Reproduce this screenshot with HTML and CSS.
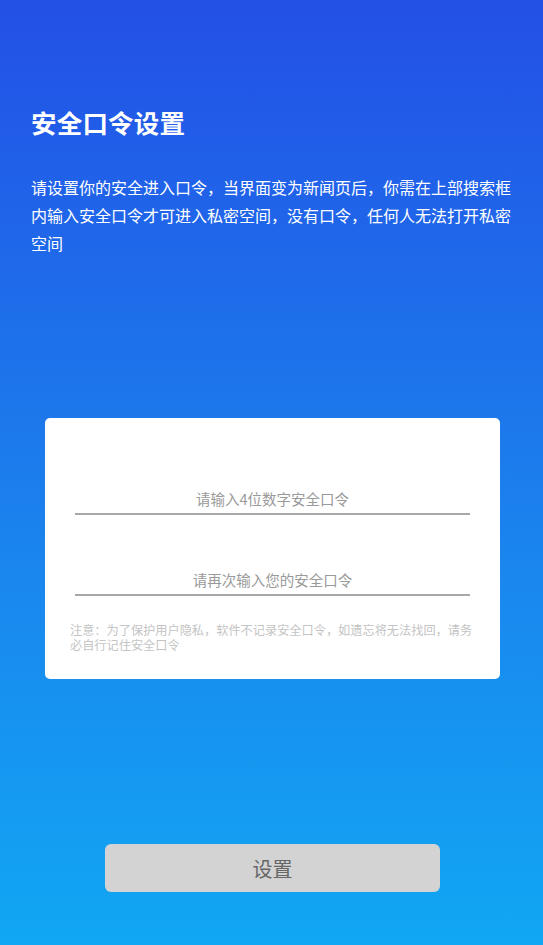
FILE: index.html
```html
<!DOCTYPE html>
<html lang="zh-CN">
<head>
<meta charset="utf-8">
<title>安全口令设置</title>
<link rel="stylesheet" href="styles.css">
</head>
<body>
<div class="page">
  <header class="intro">
    <h1 class="title">安全口令设置</h1>
    <p class="desc">请设置你的安全进入口令，当界面变为新闻页后，你需在上部搜索框内输入安全口令才可进入私密空间，没有口令，任何人无法打开私密空间</p>
  </header>
  <section class="card">
    <input class="field field-first" type="password" placeholder="请输入4位数字安全口令">
    <input class="field field-second" type="password" placeholder="请再次输入您的安全口令">
    <p class="note">注意：为了保护用户隐私，软件不记录安全口令，如遗忘将无法找回，请务必自行记住安全口令</p>
  </section>
  <div class="actions">
    <button class="btn" type="button">设置</button>
  </div>
</div>
</body>
</html>
```

FILE: styles.css
```css
* { box-sizing: border-box; }
html, body { margin: 0; padding: 0; }
body {
  width: 543px;
  height: 945px;
  overflow: hidden;
  font-family: "Noto Sans CJK SC", "Noto Sans", sans-serif;
  background: linear-gradient(180deg, #2350e6 0%, #1a86ee 60%, #11a7f4 100%);
}
.page {
  display: flex;
  flex-direction: column;
  height: 945px;
}
.intro {
  padding: 103px 0 0 31px;
}
.title {
  margin: 0;
  font-size: 25.5px;
  line-height: 38px;
  font-weight: 700;
  color: #ffffff;
  letter-spacing: 0.2px;
}
.desc {
  margin: 32px 0 0 0;
  font-size: 16px;
  line-height: 28px;
  color: #ffffff;
  width: 486px;
}
.card {
  margin: 161px 43px 0 45px;
  height: 261px;
  background: #ffffff;
  border-radius: 5px;
  padding: 65px 30px 0 30px;
  display: flex;
  flex-direction: column;
}
.field {
  display: block;
  width: 395px;
  height: 32px;
  border: none;
  border-bottom: 2px solid #a8a8a8;
  outline: none;
  background: transparent;
  text-align: center;
  font-family: "Noto Sans CJK SC", "Noto Sans", sans-serif;
  font-size: 14.5px;
  padding: 0;
  color: #333;
}
.field::placeholder { color: #9a9a9a; }
.field-second { margin-top: 49px; }
.note {
  margin: 27px -5px 0 -5px;
  font-size: 12.2px;
  line-height: 15px;
  color: #c4c4c4;
}
.actions {
  display: flex;
  justify-content: center;
  margin-top: 165px;
  padding-left: 2px;
}
.btn {
  width: 335px;
  height: 48px;
  border: none;
  border-radius: 6px;
  background: #d3d3d3;
  color: #666666;
  font-family: "Noto Sans CJK SC", "Noto Sans", sans-serif;
  font-size: 20px;
  padding: 0;
}
```
